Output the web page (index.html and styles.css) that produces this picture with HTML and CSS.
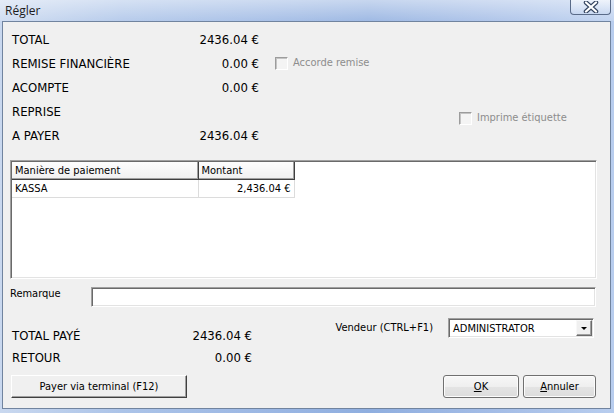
FILE: index.html
```html
<!DOCTYPE html>
<html lang="fr">

<head>
  <meta charset="UTF-8">
  <title>Régler</title>
  <link rel="stylesheet" href="styles.css">
</head>

<body>
  <div class="window">
    <div class="titlebar">
      <span class="title">Régler</span>
      <span class="close">
        <svg width="16" height="12" viewBox="0 0 16 12">
          <path d="M3 1.5 L13 10.5 M13 1.5 L3 10.5" stroke="#34445f" stroke-width="4.5" stroke-linecap="round" />
          <path d="M3 1.5 L13 10.5 M13 1.5 L3 10.5" stroke="#fff" stroke-width="2.2" stroke-linecap="round" />
        </svg>
      </span>
    </div>

    <div class="client">
      <div class="summary">
        <div class="amounts">
          <span class="lbl">TOTAL</span><span class="val">2436.04 €</span><span></span>
          <span class="lbl">REMISE FINANCIÈRE</span><span class="val">0.00 €</span>
          <label class="check"><span class="box"></span>Accorde remise</label>
          <span class="lbl">ACOMPTE</span><span class="val">0.00 €</span><span></span>
          <span class="lbl">REPRISE</span><span class="val"></span><span></span>
          <span class="lbl">A PAYER</span><span class="val">2436.04 €</span><span></span>
        </div>
        <div class="printOpt">
          <label class="check"><span class="box"></span>Imprime étiquette</label>
        </div>
      </div>

      <div class="payBox">
        <table class="payTable">
          <tr>
            <th class="colType">Manière de paiement</th>
            <th class="colAmount">Montant</th>
          </tr>
          <tr>
            <td>KASSA</td>
            <td class="num">2,436.04 €</td>
          </tr>
        </table>
      </div>

      <div class="remark">
        <span class="remarkLbl">Remarque</span>
        <span class="field"></span>
      </div>

      <div class="footer">
        <div class="paid">
          <div class="totals">
            <span class="lbl">TOTAL PAYÉ</span><span class="val">2436.04 €</span>
            <span class="lbl">RETOUR</span><span class="val">0.00 €</span>
          </div>
          <button class="classicBtn">Payer via terminal (F12)</button>
        </div>

        <div class="actions">
          <div class="seller">
            <span class="sellerLbl">Vendeur (CTRL+F1)</span>
            <span class="select">
              <span class="selectText">ADMINISTRATOR</span>
              <span class="arrow"></span>
            </span>
          </div>
          <div class="buttons">
            <button class="btn ok"><u>O</u>K</button>
            <button class="btn cancel"><u>A</u>nnuler</button>
          </div>
        </div>
      </div>
    </div>
  </div>
</body>

</html>
```

FILE: styles.css
```css
body {
  margin: 0;
  overflow: hidden;
  font-family: "DejaVu Sans Condensed", "DejaVu Sans", sans-serif;
  font-size: 11px;
  color: #000;
}

.window {
  width: 614px;
  height: 413px;
  display: flex;
  flex-direction: column;
  background: linear-gradient(90deg, #c9d8ef, #abc3e8 20%, #9ab6e3 45%, #8faedf 60%, #a3bce6 80%, #b8cdee);
}

/* title bar */
.titlebar {
  height: 21px;
  display: flex;
  align-items: flex-start;
  padding-left: 5px;
  background: linear-gradient(180deg, rgba(255, 255, 255, 0.5), rgba(255, 255, 255, 0.15));
}

.title {
  font-family: "Open Sans", sans-serif;
  font-size: 12px;
  line-height: 22px;
  color: #1c1c1c;
}

.close {
  margin-left: auto;
  margin-right: 3px;
  width: 41px;
  height: 15px;
  box-sizing: border-box;
  border: 1px solid #5a6b88;
  border-top: none;
  border-radius: 0 0 4px 4px;
  background: linear-gradient(180deg, rgba(255, 255, 255, 0.55), rgba(200, 215, 240, 0.4));
  display: flex;
  justify-content: center;
  align-items: center;
}

/* client area */
.client {
  flex: 1;
  margin: 0 3px 4px 2px;
  border: 1px solid #71849f;
  background: #f0f0f0;
  padding: 5px 13px 0 7px;
}

.summary {
  display: flex;
  padding-left: 2px;
}

.amounts {
  display: grid;
  grid-template-columns: 170px 77px 200px;
  grid-auto-rows: 24px;
  align-items: center;
}

.lbl {
  font-size: 13px;
}

.val {
  font-size: 13px;
  text-align: right;
}

.check {
  display: flex;
  align-items: center;
  gap: 5px;
  color: #8d8d8d;
  line-height: 16px;
}

.amounts .check {
  padding-left: 16px;
}

.box {
  width: 13px;
  height: 13px;
  box-sizing: border-box;
  border: 1px solid;
  border-color: #9c9c9c #fff #fff #9c9c9c;
  box-shadow: inset 1px 1px #c4c4c4;
  background: #f4f4f4;
}

.printOpt {
  padding-top: 83px;
}

/* payments list */
.payBox {
  margin-top: 13px;
  height: 119px;
  box-sizing: border-box;
  background: #fff;
  border: 1px solid;
  border-color: #a0a0a0 #fff #fff #a0a0a0;
  box-shadow: inset 1px 1px #6a6a6a, inset -1px -1px #e3e3e3;
  padding: 1px 0 0 1px;
}

.payTable {
  border-collapse: collapse;
  table-layout: fixed;
}

.payTable th {
  height: 17px;
  box-sizing: border-box;
  padding: 0 3px;
  text-align: left;
  font-weight: normal;
  background: linear-gradient(180deg, #fdfdfd, #f0f0f0);
  border-right: 1px solid #404040;
  border-bottom: 1px solid #404040;
  box-shadow: inset -1px -1px #a0a0a0;
}

.colType {
  width: 186px;
}

.colAmount {
  width: 96px;
}

.payTable td {
  height: 17px;
  padding: 0 3px;
  border-right: 1px solid #dcdcdc;
  border-bottom: 1px solid #dcdcdc;
}

.payTable .num {
  text-align: right;
}

/* remark */
.remark {
  margin-top: 8px;
  display: flex;
  align-items: flex-start;
}

.remarkLbl {
  width: 81px;
  line-height: 14px;
}

.field {
  flex: 1;
  height: 20px;
  margin-right: 1px;
  box-sizing: border-box;
  background: #fff;
  border: 1px solid;
  border-color: #a0a0a0 #fff #fff #a0a0a0;
  box-shadow: inset 1px 1px #6a6a6a, inset -1px -1px #e3e3e3;
}

/* bottom */
.footer {
  display: flex;
}

.paid {
  padding: 17px 0 0 2px;
}

.totals {
  display: grid;
  grid-template-columns: 170px 70px;
  grid-auto-rows: 22px;
  align-items: center;
}

.classicBtn {
  margin: 7px 0 0 -1px;
  width: 176px;
  height: 23px;
  font-family: inherit;
  font-size: 11px;
  color: #000;
  background: #f0f0f0;
  border: 1px solid;
  border-color: #fff #404040 #404040 #fff;
  box-shadow: inset -1px -1px #a0a0a0;
}

.actions {
  margin-left: auto;
  padding-top: 11px;
}

.seller {
  display: flex;
  align-items: center;
  justify-content: flex-end;
  margin-right: 3px;
}

.sellerLbl {
  margin-right: 15px;
  margin-top: -2px;
}

.select {
  width: 146px;
  height: 20px;
  box-sizing: border-box;
  display: flex;
  align-items: center;
  background: #fff;
  border: 1px solid;
  border-color: #a0a0a0 #fff #fff #a0a0a0;
  box-shadow: inset 1px 1px #6a6a6a, inset -1px -1px #e3e3e3;
  padding: 1px 1px 1px 4px;
}

.selectText {
  flex: 1;
}

.arrow {
  width: 16px;
  height: 16px;
  box-sizing: border-box;
  background: #f0f0f0;
  border: 1px solid;
  border-color: #f8f8f8 #6a6a6a #6a6a6a #f8f8f8;
  box-shadow: inset -1px -1px #a0a0a0;
  display: flex;
  justify-content: center;
  align-items: center;
}

.arrow::after {
  content: "";
  border-left: 3px solid transparent;
  border-right: 3px solid transparent;
  border-top: 3px solid #000;
  margin-top: 1px;
}

.buttons {
  margin-top: 37px;
  margin-right: 1px;
  display: flex;
  justify-content: flex-end;
  gap: 4px;
}

.btn {
  height: 23px;
  font-family: inherit;
  font-size: 11px;
  color: #000;
  border: 1px solid #707070;
  border-radius: 3px;
  background: linear-gradient(180deg, #f7f7f7, #efefef 50%, #e4e4e4 51%, #dcdcdc);
  box-shadow: inset 0 0 0 1px #fcfcfc;
}

.ok {
  width: 76px;
}

.cancel {
  width: 73px;
}
```
